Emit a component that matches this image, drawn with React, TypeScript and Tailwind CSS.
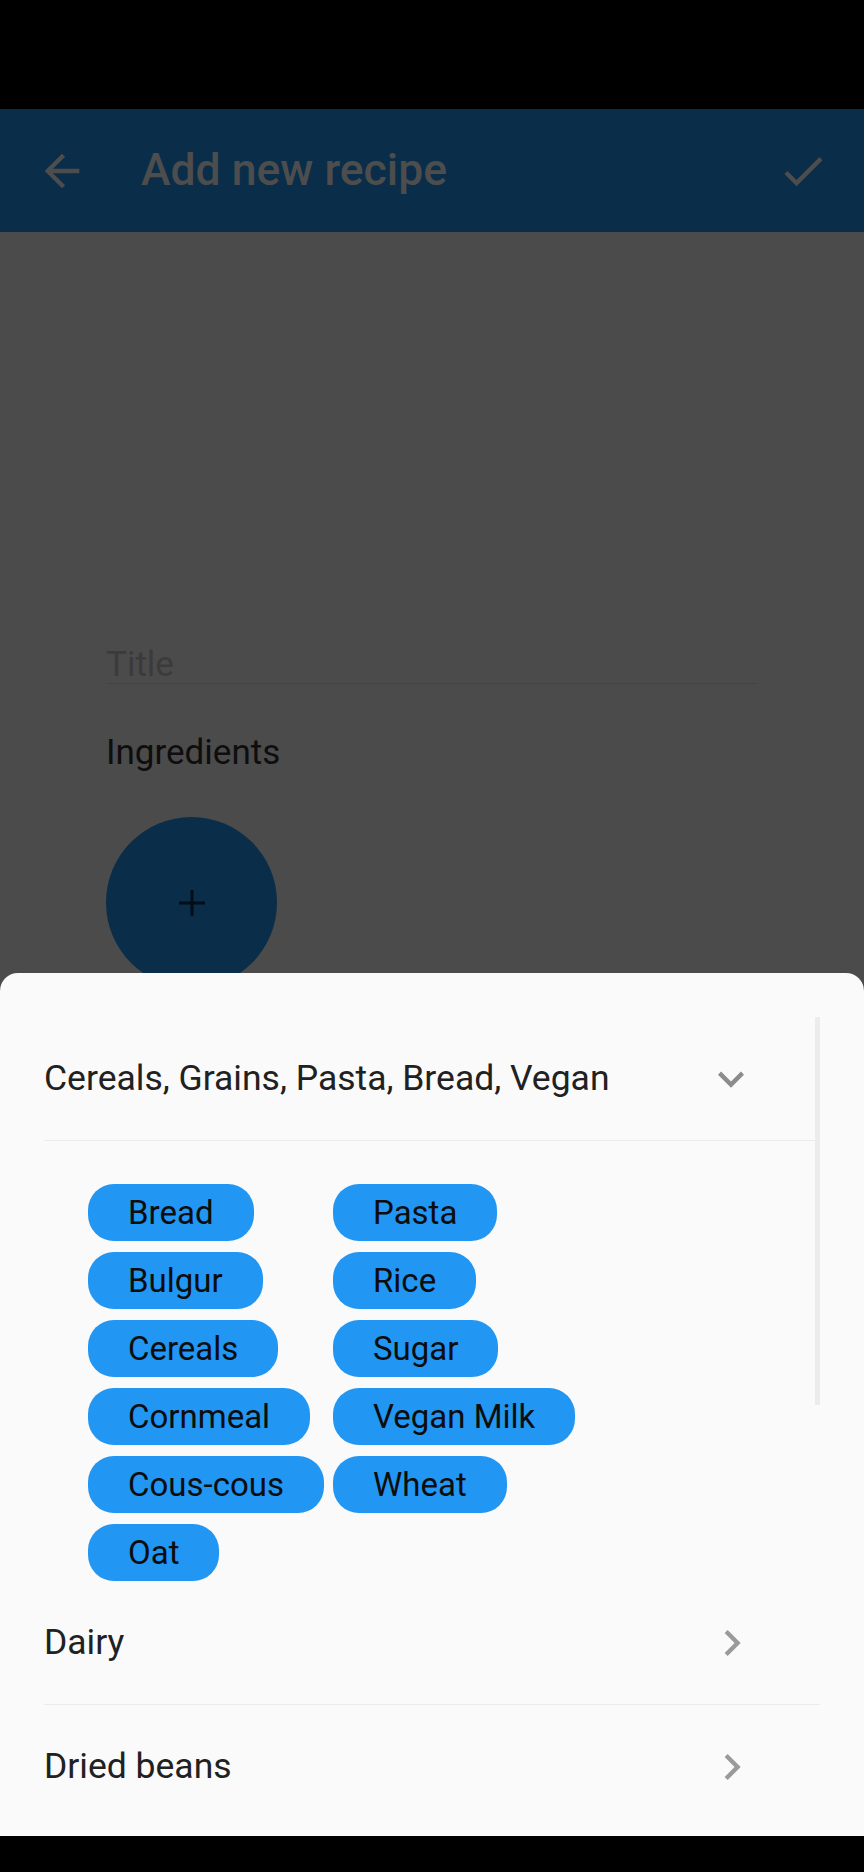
import React from "react";

const font = { fontFamily: "Roboto, 'Noto Sans', sans-serif" };

function ChevronDown() {
  return (
    <svg width="52" height="52" viewBox="0 0 24 24" className="shrink-0">
      <path d="M16.59 8.59L12 13.17 7.41 8.59 6 10l6 6 6-6z" fill="#8c8c8c" />
    </svg>
  );
}

function ChevronRight() {
  return (
    <svg width="52" height="52" viewBox="0 0 24 24" className="shrink-0">
      <path d="M10 6L8.59 7.41 13.17 12l-4.58 4.59L10 18l6-6z" fill="#9a9a9a" />
    </svg>
  );
}

function Chip({ label }: { label: string }) {
  return (
    <div className="h-[57px] rounded-[26px] bg-[#2196f3] px-[40px] flex items-center self-start">
      <span className="text-[33px] leading-none text-[#0d0d0d] whitespace-nowrap">{label}</span>
    </div>
  );
}

const col1 = ["Bread", "Bulgur", "Cereals", "Cornmeal", "Cous-cous", "Oat"];
const col2 = ["Pasta", "Rice", "Sugar", "Vegan Milk", "Wheat"];

export default function App() {
  return (
    <div className="w-[864px] h-[1872px] flex flex-col bg-black overflow-hidden" style={font}>
      {/* status bar */}
      <div className="h-[109px] bg-black shrink-0" />
      {/* app bar */}
      <div className="h-[123px] bg-[#0a2d49] shrink-0 flex items-center">
        <div className="ml-[36px] w-[52px] h-[52px] flex items-center justify-center">
          <svg width="52" height="52" viewBox="0 0 24 24">
            <path d="M20 11H7.83l5.59-5.59L12 4l-8 8 8 8 1.41-1.41L7.83 13H20v-2z" fill="#4d4d4d" />
          </svg>
        </div>
        <div className="ml-[53px] text-[44.5px] font-medium text-[#4d4d4d] leading-none">Add new recipe</div>
        <div className="ml-auto mr-[35px] w-[52px] h-[52px]">
          <svg width="52" height="52" viewBox="0 0 24 24">
            <path d="M9 16.17L4.83 12l-1.42 1.41L9 19 21 7l-1.41-1.41z" fill="#4d4d4d" />
          </svg>
        </div>
      </div>
      {/* body */}
      <div className="h-[741px] shrink-0 bg-[#4b4b4b] overflow-hidden px-[106px] pt-[414px]">
        <div className="h-[38px] border-b border-[#444444] text-[35px] leading-[37px] text-[#3b3b3b]">Title</div>
        <div className="mt-[49px] text-[35px] leading-[40px] text-[#0e0e0e]">Ingredients</div>
        <div className="mt-[44px] w-[171px] h-[171px] rounded-full bg-[#0a2d49] flex items-center justify-center">
          <svg width="26" height="26" viewBox="0 0 26 26">
            <rect x="0" y="11.5" width="26" height="3" fill="#030d17" />
            <rect x="11.5" y="0" width="3" height="26" fill="#030d17" />
          </svg>
        </div>
      </div>
      {/* bottom sheet */}
      <div className="h-[863px] shrink-0 bg-[#4b4b4b]">
        <div className="relative h-full bg-[#fafafa] rounded-t-[18px] overflow-hidden pt-[44px]">
          <div className="absolute left-[815px] top-[44px] w-[5px] h-[388px] bg-[#ececec]" />
          <div className="ml-[44px] w-[776px]">
            <div className="h-[123px] flex items-center">
              <span className="text-[35.5px] text-[#212121] leading-none">Cereals, Grains, Pasta, Bread, Vegan</span>
              <div className="ml-auto mr-[63px]">
                <ChevronDown />
              </div>
            </div>
            <div className="h-px bg-[#ececec]" />
            <div className="pt-[43px] pl-[44px] flex gap-[12px]">
              <div className="w-[233px] flex flex-col gap-[11px]">
                {col1.map((c) => (
                  <Chip key={c} label={c} />
                ))}
              </div>
              <div className="flex flex-col gap-[11px]">
                {col2.map((c) => (
                  <Chip key={c} label={c} />
                ))}
              </div>
            </div>
            <div className="h-[123px] flex items-center">
              <span className="text-[35.5px] text-[#212121] leading-none">Dairy</span>
              <div className="ml-auto mr-[62px]">
                <ChevronRight />
              </div>
            </div>
            <div className="h-px bg-[#ececec]" />
            <div className="h-[123px] flex items-center">
              <span className="text-[35.5px] text-[#212121] leading-none">Dried beans</span>
              <div className="ml-auto mr-[62px]">
                <ChevronRight />
              </div>
            </div>
          </div>
        </div>
      </div>
      {/* nav bar */}
      <div className="h-[36px] bg-black shrink-0" />
    </div>
  );
}
